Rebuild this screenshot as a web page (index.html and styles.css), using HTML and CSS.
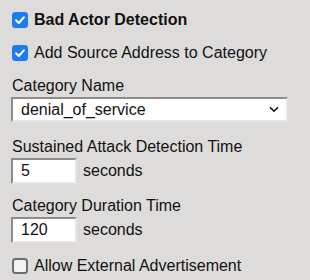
FILE: index.html
```html
<!DOCTYPE html>
<html>
<head>
<meta charset="utf-8">
<link rel="stylesheet" href="styles.css">
</head>
<body>
<div class="panel">
  <label class="check-row first">
    <span class="cb checked"><svg viewBox="0 0 16 16" width="16" height="16"><path d="M4 8.3 L6.8 11 L12 5.2" fill="none" stroke="#fff" stroke-width="2" stroke-linecap="round" stroke-linejoin="round"/></svg></span>
    <span class="bold">Bad Actor Detection</span>
  </label>
  <label class="check-row second">
    <span class="cb checked"><svg viewBox="0 0 16 16" width="16" height="16"><path d="M4 8.3 L6.8 11 L12 5.2" fill="none" stroke="#fff" stroke-width="2" stroke-linecap="round" stroke-linejoin="round"/></svg></span>
    <span>Add Source Address to Category</span>
  </label>

  <div class="field field-name">
    <div class="label">Category Name</div>
    <div class="select">
      <span>denial_of_service</span>
      <svg class="chev" viewBox="0 0 10 7" width="10" height="7"><path d="M1 1.2 L5 5.2 L9 1.2" fill="none" stroke="#111" stroke-width="1.6"/></svg>
    </div>
  </div>

  <div class="field field-sustained">
    <div class="label">Sustained Attack Detection Time</div>
    <div class="inline">
      <div class="input">5</div>
      <span>seconds</span>
    </div>
  </div>

  <div class="field field-duration">
    <div class="label">Category Duration Time</div>
    <div class="inline">
      <div class="input">120</div>
      <span>seconds</span>
    </div>
  </div>

  <label class="check-row last">
    <span class="cb"></span>
    <span>Allow External Advertisement</span>
  </label>
</div>
</body>
</html>
```

FILE: styles.css
```css
html, body {
  margin: 0;
  padding: 0;
  background: #dedcda;
}
body {
  font-family: "Liberation Sans", Arial, sans-serif;
  font-size: 16px;
  color: #111;
}
.panel {
  width: 310px;
  height: 280px;
  padding: 0 0 0 12px;
  box-sizing: border-box;
  display: flex;
  flex-direction: column;
}
.check-row {
  display: flex;
  align-items: center;
  gap: 6px;
  height: 20px;
  line-height: 20px;
}
.check-row.first { margin-top: 9.5px; }
.check-row.second { margin-top: 13.5px; }
.check-row.last { margin-top: 13px; }
.bold { font-weight: bold; }
.cb {
  width: 16px;
  height: 16px;
  box-sizing: border-box;
  border-radius: 3.5px;
  flex: none;
  display: block;
}
.cb svg { display: block; }
.cb.checked { background: #1c7cf0; }
.cb:not(.checked) {
  border: 2px solid #6e6d77;
  background: #f4f3f1;
}
.field { display: flex; flex-direction: column; }
.field-name { margin-top: 14px; }
.field-sustained { margin-top: 16px; }
.field-duration { margin-top: 13px; }
.label {
  height: 18px;
  line-height: 18px;
}
.select {
  margin-top: 2px;
  width: 277px;
  height: 25px;
  box-sizing: border-box;
  background: #fff;
  border-top: 2px solid #8d8c8a;
  border-left: 2px solid #8d8c8a;
  border-right: 2px solid #e6e5e3;
  border-bottom: 2px solid #e6e5e3;
  display: flex;
  align-items: center;
  justify-content: space-between;
  padding: 0 7px 0 8px;
  margin-left: -1px;
}
.chev { display: block; }
.inline {
  display: flex;
  align-items: center;
  gap: 6px;
  margin-top: 2px;
}
.input {
  width: 66px;
  height: 26px;
  box-sizing: border-box;
  background: #fff;
  border-top: 2px solid #8d8c8a;
  border-left: 2px solid #8d8c8a;
  border-right: 2px solid #e6e5e3;
  border-bottom: 2px solid #e6e5e3;
  padding-left: 8px;
  line-height: 22px;
  margin-left: -1px;
}
```
